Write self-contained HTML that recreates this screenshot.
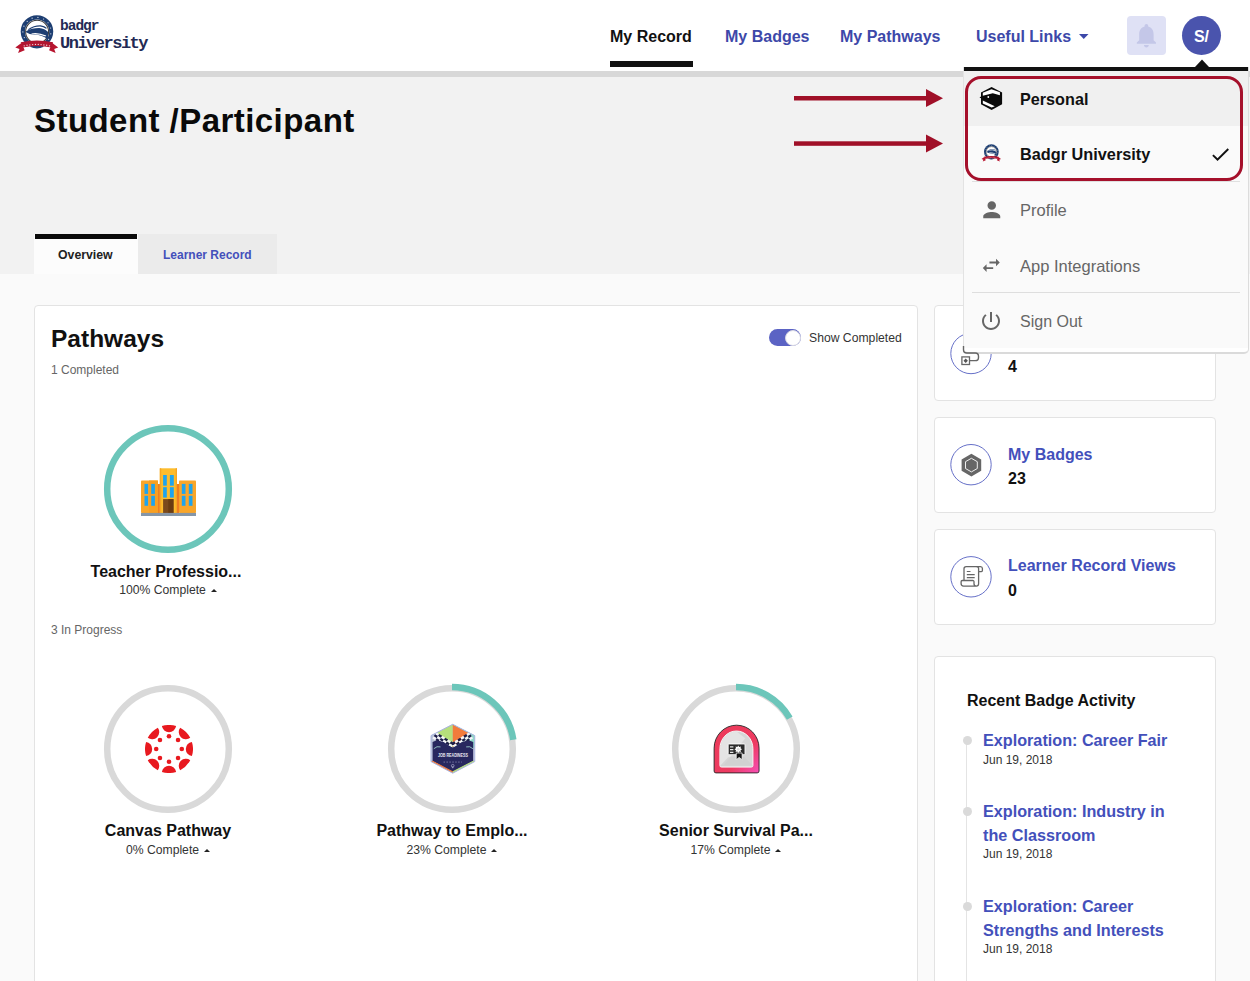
<!DOCTYPE html>
<html>
<head>
<meta charset="utf-8">
<style>
html,body{margin:0;padding:0;}
body{width:1250px;height:981px;overflow:hidden;position:relative;background:#fafafa;font-family:"Liberation Sans",sans-serif;color:#111;}
.a{position:absolute;white-space:nowrap;}
.b{font-weight:700;}
.blue{color:#4350bb;}
.nblue{color:#3d48a9;}
#hdr{position:absolute;left:0;top:0;width:1250px;height:71px;background:#fff;}
#band{position:absolute;left:0;top:71px;width:1250px;height:6px;background:#d8d8d8;}
#hero{position:absolute;left:0;top:77px;width:1250px;height:197px;background:#f2f2f2;}
.car{display:inline-block;width:0;height:0;border-left:3px solid transparent;border-right:3px solid transparent;border-bottom:3.5px solid #222;margin-left:5px;vertical-align:2px;}
.card{position:absolute;background:#fff;border:1px solid #e3e3e3;border-radius:4px;box-sizing:border-box;}
</style>
</head>
<body>
<div id="hdr"></div>
<div id="band"></div>
<div id="hero"></div>

<!-- logo -->
<svg class="a" style="left:12px;top:10px" width="50" height="46" viewBox="0 0 1066 981">
  <circle cx="532" cy="457" r="347" fill="#1d3e72"/>
  <circle cx="339" cy="687" r="13" fill="#dfe6f0"/><circle cx="262" cy="589" r="13" fill="#dfe6f0"/><circle cx="232" cy="467" r="13" fill="#dfe6f0"/><circle cx="254" cy="345" r="13" fill="#dfe6f0"/><circle cx="324" cy="241" r="13" fill="#dfe6f0"/><circle cx="429" cy="175" r="13" fill="#dfe6f0"/><circle cx="553" cy="158" r="13" fill="#dfe6f0"/><circle cx="673" cy="192" r="13" fill="#dfe6f0"/><circle cx="768" cy="272" r="13" fill="#dfe6f0"/><circle cx="823" cy="384" r="13" fill="#dfe6f0"/><circle cx="827" cy="509" r="13" fill="#dfe6f0"/><circle cx="781" cy="625" r="13" fill="#dfe6f0"/><circle cx="691" cy="711" r="13" fill="#dfe6f0"/>
  <circle cx="535" cy="462" r="258" fill="#fff"/>
  <circle cx="535" cy="462" r="245" fill="none" stroke="#3a3a3a" stroke-width="22"/>
  <path d="M340 410 Q470 320 610 325 Q700 335 745 385 L725 400 Q670 355 600 352 Q470 350 360 425 Z" fill="#1d3e72"/>
  <path d="M300 455 Q420 385 580 385 Q700 395 770 470 L765 630 Q640 525 450 525 Q380 522 300 475 Z" fill="#1d3e72"/>
  <path d="M410 500 Q560 470 730 545 L712 565 Q560 505 430 518 Z" fill="#fff"/>
  <path d="M395 790 Q530 850 665 790 L660 770 Q530 815 400 770 Z" fill="#1d3e72"/>
  <path d="M200 705 L70 800 L160 830 L130 915 L270 860 L240 790 Z" fill="#b8152f"/>
  <path d="M860 705 L985 800 L900 830 L930 915 L790 860 L820 790 Z" fill="#b8152f"/>
  <path d="M185 690 Q530 615 875 690 L845 800 Q530 735 225 800 Z" fill="#b01530"/>
  <circle cx="260" cy="764" r="14" fill="#f3d6dc"/><circle cx="320" cy="752" r="14" fill="#f3d6dc"/><circle cx="380" cy="744" r="14" fill="#f3d6dc"/><circle cx="440" cy="738" r="14" fill="#f3d6dc"/><circle cx="500" cy="735" r="14" fill="#f3d6dc"/><circle cx="560" cy="735" r="14" fill="#f3d6dc"/><circle cx="620" cy="738" r="14" fill="#f3d6dc"/><circle cx="680" cy="744" r="14" fill="#f3d6dc"/><circle cx="740" cy="752" r="14" fill="#f3d6dc"/><circle cx="800" cy="764" r="14" fill="#f3d6dc"/>
</svg>
<div class="a b" style="left:60px;top:18.5px;font-family:'Liberation Mono',monospace;font-size:14.5px;line-height:14px;letter-spacing:-1px;color:#232a54">badgr</div>
<div class="a b" style="left:60px;top:34.5px;font-family:'Liberation Mono',monospace;font-size:17px;line-height:17px;letter-spacing:-1.5px;color:#232a54">University</div>

<!-- nav -->
<div class="a b" style="left:610px;top:29px;font-size:16px;line-height:16px;color:#111">My Record</div>
<div class="a" style="left:610px;top:61px;width:83px;height:6px;background:#111"></div>
<div class="a b nblue" style="left:725px;top:29px;font-size:16px;line-height:16px">My Badges</div>
<div class="a b nblue" style="left:840px;top:29px;font-size:16px;line-height:16px">My Pathways</div>
<div class="a b nblue" style="left:976px;top:29px;font-size:16px;line-height:16px">Useful Links</div>
<svg class="a" style="left:1079px;top:33.5px" width="9.5" height="5" viewBox="0 0 9.5 5"><path d="M0 0 H9.5 L4.75 5 Z" fill="#3d48a9"/></svg>
<div class="a" style="left:1127px;top:16px;width:39px;height:39px;border-radius:4px;background:#dfe1f5"></div>
<svg class="a" style="left:1131.8px;top:21px" width="28.8" height="28.8" viewBox="0 0 24 24"><path d="M12 22c1.1 0 2-.9 2-2h-4c0 1.1.89 2 2 2zm6-6v-5c0-3.07-1.64-5.64-4.5-6.32V4c0-.83-.67-1.5-1.5-1.5s-1.5.67-1.5 1.5v.68C7.630 5.36 6 7.920 6 11v5l-2 2v1h16v-1l-2-2z" fill="#c4c7e8"/></svg>
<div class="a" style="left:1182px;top:16px;width:39px;height:39px;border-radius:50%;background:#4a54ad;color:#fff;font-weight:700;font-size:16px;line-height:41px;text-align:center">S/</div>

<!-- title -->
<div class="a b" style="left:34px;top:104px;font-size:33px;line-height:33px;letter-spacing:0.45px;color:#0a0a0a">Student /Participant</div>

<!-- tabs -->
<div class="a" style="left:34px;top:234px;width:104px;height:40px;background:#fcfcfc"></div>
<div class="a" style="left:35px;top:234px;width:102px;height:4.6px;background:#0a0a0a"></div>
<div class="a b" style="left:58px;top:249px;font-size:12.3px;line-height:12px;color:#222">Overview</div>
<div class="a" style="left:138px;top:234px;width:139px;height:40px;background:#ebebeb"></div>
<div class="a b blue" style="left:163px;top:249px;font-size:12px;line-height:12px">Learner Record</div>

<!-- pathways card -->
<div class="card" style="left:34px;top:305px;width:884px;height:700px"></div>
<div class="a b" style="left:51px;top:327px;font-size:24.5px;line-height:24px;color:#111">Pathways</div>
<div class="a" style="left:51px;top:364px;font-size:12px;line-height:12px;color:#666">1 Completed</div>
<div class="a" style="left:769px;top:329px;width:32px;height:17px;border-radius:9px;background:#5b63c4"></div>
<div class="a" style="left:785px;top:329.5px;width:16px;height:16px;border-radius:50%;background:#fff;border:1px solid #d8d8e4;box-sizing:border-box"></div>
<div class="a" style="left:809px;top:332px;font-size:12.2px;line-height:12px;color:#333">Show Completed</div>

<!-- completed item -->
<svg class="a" style="left:102px;top:423px" width="132" height="132" viewBox="0 0 132 132">
  <circle cx="66" cy="66" r="60.8" fill="#fff" stroke="#6cc6ba" stroke-width="6.5"/>
</svg>
<svg class="a" style="left:141px;top:468px" width="56" height="49" viewBox="0 0 56 49">
  <rect x="0" y="12.5" width="17" height="32.5" rx="0.8" fill="#f9a62a"/>
  <rect x="38" y="12.5" width="17" height="32.5" rx="0.8" fill="#f9a62a"/>
  <rect x="8" y="12.5" width="9" height="32.5" fill="#f8a022"/>
  <rect x="17" y="16" width="2.2" height="29" fill="#ef7d22"/>
  <rect x="35.9" y="16" width="2.2" height="29" fill="#ef7d22"/>
  <rect x="18.8" y="0.3" width="17.2" height="44.7" fill="#fdbc2c"/>
  <rect x="18.8" y="0.3" width="1.4" height="44.7" fill="#f6a624"/>
  <rect x="34.6" y="0.3" width="1.4" height="44.7" fill="#f6a624"/>
  <g fill="#1ea4ef">
    <rect x="3.5" y="15.9" width="3.6" height="10"/><rect x="10.2" y="15.9" width="3.7" height="10"/>
    <rect x="3.5" y="27.8" width="3.6" height="10"/><rect x="10.2" y="27.8" width="3.7" height="10"/>
    <rect x="40.8" y="15.9" width="3.7" height="10"/><rect x="47.8" y="15.9" width="3.7" height="10"/>
    <rect x="40.8" y="27.8" width="3.7" height="10"/><rect x="47.8" y="27.8" width="3.7" height="10"/>
    <rect x="22.1" y="7" width="3.7" height="10.7"/><rect x="28.9" y="7" width="3.9" height="10.7"/>
    <rect x="22.1" y="19.2" width="3.7" height="10.4"/><rect x="28.9" y="19.2" width="3.9" height="10.4"/>
  </g>
  <rect x="22.1" y="31.1" width="10.4" height="13.9" fill="#7b4a1c"/>
  <rect x="27.3" y="31.1" width="5.2" height="13.9" fill="#6a3c12"/>
  <rect x="0" y="44.9" width="55" height="3.1" fill="#8596a8"/>
</svg>
<div class="a b" style="left:66px;top:564px;width:200px;text-align:center;font-size:16px;line-height:16px;color:#111">Teacher Professio...</div>
<div class="a" style="left:68px;top:584px;width:200px;text-align:center;font-size:12.2px;line-height:12px;color:#333">100% Complete<span class="car"></span></div>
<div class="a" style="left:51px;top:624px;font-size:12px;line-height:12px;color:#666">3 In Progress</div>

<!-- in progress items -->
<svg class="a" style="left:102px;top:683px" width="132" height="132" viewBox="0 0 132 132">
  <circle cx="66" cy="66" r="60.8" fill="#fff" stroke="#d9d9d9" stroke-width="6.5"/>
</svg>
<svg class="a" style="left:144.6px;top:724.9px" width="48" height="48" viewBox="0 0 48 48"><g fill="#e8191f"><path d="M31.12 1.08 A24.0 24.0 0 0 0 16.88 1.08 A7.2 7.2 0 0 0 31.12 1.08 Z M45.24 12.83 A24.0 24.0 0 0 0 35.17 2.76 A7.2 7.2 0 0 0 45.24 12.83 Z M46.92 31.12 A24.0 24.0 0 0 0 46.92 16.88 A7.2 7.2 0 0 0 46.92 31.12 Z M35.17 45.24 A24.0 24.0 0 0 0 45.24 35.17 A7.2 7.2 0 0 0 35.17 45.24 Z M16.88 46.92 A24.0 24.0 0 0 0 31.12 46.92 A7.2 7.2 0 0 0 16.88 46.92 Z M2.76 35.17 A24.0 24.0 0 0 0 12.83 45.24 A7.2 7.2 0 0 0 2.76 35.17 Z M1.08 16.88 A24.0 24.0 0 0 0 1.08 31.12 A7.2 7.2 0 0 0 1.08 16.88 Z M12.83 2.76 A24.0 24.0 0 0 0 2.76 12.83 A7.2 7.2 0 0 0 12.83 2.76 Z"/><circle cx="24.00" cy="11.20" r="2.3"/><circle cx="33.05" cy="14.95" r="2.3"/><circle cx="36.80" cy="24.00" r="2.3"/><circle cx="33.05" cy="33.05" r="2.3"/><circle cx="24.00" cy="36.80" r="2.3"/><circle cx="14.95" cy="33.05" r="2.3"/><circle cx="11.20" cy="24.00" r="2.3"/><circle cx="14.95" cy="14.95" r="2.3"/></g></svg>
<div class="a b" style="left:68px;top:823px;width:200px;text-align:center;font-size:16px;line-height:16px;color:#111">Canvas Pathway</div>
<div class="a" style="left:68px;top:844px;width:200px;text-align:center;font-size:12.2px;line-height:12px;color:#333">0% Complete<span class="car"></span></div>

<svg class="a" style="left:386px;top:683px" width="132" height="132" viewBox="0 0 132 132">
  <circle cx="66" cy="66" r="60.8" fill="#fff" stroke="#d9d9d9" stroke-width="6.5"/>
  <circle cx="66" cy="66" r="62" fill="none" stroke="#6cc6ba" stroke-width="6.5" stroke-dasharray="87.9 400" transform="rotate(-90 66 66)"/>
</svg>
<svg class="a" style="left:424px;top:720px" width="56" height="60" viewBox="0 0 916 981">
  <defs><clipPath id="hexc"><path d="M470 70 L830 255 L830 680 L470 870 L115 680 L115 255 Z"/></clipPath></defs>
  <path d="M470 70 L830 255 L830 680 L470 870 L115 680 L115 255 Z" fill="#c6cde3"/>
  <g clip-path="url(#hexc)">
    <path d="M100 60 L470 60 L470 450 L100 450 Z" fill="#b9c4d8"/>
    <path d="M470 60 L840 60 L840 450 L470 450 Z" fill="#8fd7c8"/>
    <path d="M470 75 L200 215 L470 450 Z" fill="#b6df7b"/>
    <path d="M470 75 L740 215 L470 450 Z" fill="#f27b3c"/>
    <path d="M202 199 L250 229 L229 263 L181 233 Z" fill="#f4f4f8"/><path d="M181 233 L229 263 L208 297 L159 267 Z" fill="#1e1e4a"/><path d="M159 267 L208 297 L187 331 L138 301 Z" fill="#f4f4f8"/><path d="M250 229 L298 259 L277 293 L229 263 Z" fill="#1e1e4a"/><path d="M229 263 L277 293 L256 327 L208 297 Z" fill="#f4f4f8"/><path d="M208 297 L256 327 L235 361 L187 331 Z" fill="#1e1e4a"/><path d="M298 259 L347 289 L326 323 L277 293 Z" fill="#f4f4f8"/><path d="M277 293 L326 323 L304 357 L256 327 Z" fill="#1e1e4a"/><path d="M256 327 L304 357 L283 391 L235 361 Z" fill="#f4f4f8"/><path d="M347 289 L395 319 L374 353 L326 323 Z" fill="#1e1e4a"/><path d="M326 323 L374 353 L353 387 L304 357 Z" fill="#f4f4f8"/><path d="M304 357 L353 387 L332 421 L283 391 Z" fill="#1e1e4a"/><path d="M395 319 L443 349 L422 383 L374 353 Z" fill="#f4f4f8"/><path d="M374 353 L422 383 L401 417 L353 387 Z" fill="#1e1e4a"/><path d="M353 387 L401 417 L380 451 L332 421 Z" fill="#f4f4f8"/><path d="M443 349 L492 379 L471 413 L422 383 Z" fill="#1e1e4a"/><path d="M422 383 L471 413 L449 447 L401 417 Z" fill="#f4f4f8"/><path d="M401 417 L449 447 L428 481 L380 451 Z" fill="#1e1e4a"/><path d="M802 301 L753 331 L732 297 L781 267 Z" fill="#f4f4f8"/><path d="M781 267 L732 297 L711 263 L759 233 Z" fill="#1e1e4a"/><path d="M759 233 L711 263 L690 229 L738 199 Z" fill="#f4f4f8"/><path d="M753 331 L705 361 L684 327 L732 297 Z" fill="#1e1e4a"/><path d="M732 297 L684 327 L663 293 L711 263 Z" fill="#f4f4f8"/><path d="M711 263 L663 293 L642 259 L690 229 Z" fill="#1e1e4a"/><path d="M705 361 L657 391 L636 357 L684 327 Z" fill="#f4f4f8"/><path d="M684 327 L636 357 L614 323 L663 293 Z" fill="#1e1e4a"/><path d="M663 293 L614 323 L593 289 L642 259 Z" fill="#f4f4f8"/><path d="M657 391 L608 421 L587 387 L636 357 Z" fill="#1e1e4a"/><path d="M636 357 L587 387 L566 353 L614 323 Z" fill="#f4f4f8"/><path d="M614 323 L566 353 L545 319 L593 289 Z" fill="#1e1e4a"/><path d="M608 421 L560 451 L539 417 L587 387 Z" fill="#f4f4f8"/><path d="M587 387 L539 417 L518 383 L566 353 Z" fill="#1e1e4a"/><path d="M566 353 L518 383 L497 349 L545 319 Z" fill="#f4f4f8"/><path d="M560 451 L512 481 L491 447 L539 417 Z" fill="#1e1e4a"/><path d="M539 417 L491 447 L469 413 L518 383 Z" fill="#f4f4f8"/><path d="M518 383 L469 413 L448 379 L497 349 Z" fill="#1e1e4a"/>
    <path d="M140 360 Q200 330 260 345 Q330 360 380 400 Q430 440 470 450 Q510 440 560 400 Q610 360 680 345 Q740 330 805 360 L805 670 L470 850 L140 670 Z" fill="#28285f"/>
    <path d="M160 470 Q210 420 270 440 M800 470 Q750 420 690 440" fill="none" stroke="#9fd4cc" stroke-width="14"/>
    <path d="M115 680 L470 870 L470 840 L140 665 Z" fill="#f27b3c"/>
    <path d="M830 680 L470 870 L470 840 L805 665 Z" fill="#b6df7b"/>
  </g>
  <path d="M470 70 L830 255 L830 680 L470 870 L115 680 L115 255 Z" fill="none" stroke="#aab4de" stroke-width="16"/>
  <text x="472" y="605" text-anchor="middle" font-family="Liberation Sans" font-weight="700" font-size="82" fill="#e8e8f2" textLength="490" lengthAdjust="spacingAndGlyphs">JOB READINESS</text>
  <path d="M320 688 H620" stroke="#8c8cb4" stroke-width="14" stroke-dasharray="22 26"/>
  <circle cx="470" cy="748" r="22" fill="none" stroke="#c9c9e6" stroke-width="9"/>
  <path d="M455 770 H485 M470 770 V790" stroke="#c9c9e6" stroke-width="9"/>
</svg>
<div class="a b" style="left:352px;top:823px;width:200px;text-align:center;font-size:16px;line-height:16px;color:#111">Pathway to Emplo...</div>
<div class="a" style="left:352px;top:844px;width:200px;text-align:center;font-size:12.2px;line-height:12px;color:#333">23% Complete<span class="car"></span></div>

<svg class="a" style="left:670px;top:683px" width="132" height="132" viewBox="0 0 132 132">
  <circle cx="66" cy="66" r="60.8" fill="#fff" stroke="#d9d9d9" stroke-width="6.5"/>
  <circle cx="66" cy="66" r="62" fill="none" stroke="#6cc6ba" stroke-width="6.5" stroke-dasharray="64.9 400" transform="rotate(-90 66 66)"/>
</svg>
<svg class="a" style="left:708px;top:720px" width="56" height="60" viewBox="0 0 916 981">
  <defs><linearGradient id="sg" x1="0" y1="0" x2="1" y2="1"><stop offset="0" stop-color="#ec3a58"/><stop offset="0.65" stop-color="#ee3b62"/><stop offset="1" stop-color="#f750b8"/></linearGradient></defs>
  <path d="M100 460 A367 375 0 0 1 835 460 V835 A30 30 0 0 1 805 865 H130 A30 30 0 0 1 100 835 Z" fill="url(#sg)" stroke="#1e1e1e" stroke-width="14"/>
  <path d="M195 470 A270 290 0 0 1 735 470 V745 A25 25 0 0 1 710 770 H220 A25 25 0 0 1 195 745 Z" fill="#d6d6d6" stroke="#f8f8f8" stroke-width="16"/>
  <path d="M203 470 A262 282 0 0 1 465 188 L610 300 L260 735 L203 735 Z" fill="#e4e4e4"/>
  <path d="M203 745 L330 610 L600 610 L727 745 Z" fill="#cfcfcf" opacity="0.7"/>
  <rect x="330" y="392" width="275" height="175" rx="14" fill="#2b2b2b" stroke="#fff" stroke-width="14"/>
  <path d="M360 440 H415 M360 485 H415 M360 530 H415" stroke="#e6e6e6" stroke-width="20"/>
  <path d="M462 540 L462 648 L510 612 L558 648 L558 540 Z" fill="#111" stroke="#fff" stroke-width="12"/>
  <path d="M557 478 L532 493 L539 522 L510 515 L495 540 L480 515 L451 522 L458 493 L433 478 L458 463 L451 434 L480 441 L495 416 L510 441 L539 434 L532 463 Z" fill="#fff"/>
  <circle cx="495" cy="478" r="22" fill="#dcdcdc"/>
</svg>
<div class="a b" style="left:636px;top:823px;width:200px;text-align:center;font-size:16px;line-height:16px;color:#111">Senior Survival Pa...</div>
<div class="a" style="left:636px;top:844px;width:200px;text-align:center;font-size:12.2px;line-height:12px;color:#333">17% Complete<span class="car"></span></div>

<!-- right cards -->
<div class="card" style="left:934px;top:305px;width:282px;height:96px"></div>
<div class="a b blue" style="left:1008px;top:336px;font-size:16px;line-height:16px">My Pathways</div>
<div class="a b" style="left:1008px;top:359px;font-size:16px;line-height:16px;color:#111">4</div>

<div class="card" style="left:934px;top:417px;width:282px;height:96px"></div>
<div class="a b blue" style="left:1008px;top:447px;font-size:16px;line-height:16px">My Badges</div>
<div class="a b" style="left:1008px;top:471px;font-size:16px;line-height:16px;color:#111">23</div>

<div class="card" style="left:934px;top:529px;width:282px;height:96px"></div>
<div class="a b blue" style="left:1008px;top:558px;font-size:16px;line-height:16px">Learner Record Views</div>
<div class="a b" style="left:1008px;top:583px;font-size:16px;line-height:16px;color:#111">0</div>


<!-- card icons -->
<svg class="a" style="left:950px;top:333px" width="42" height="42" viewBox="0 0 42 42">
  <circle cx="21" cy="20.5" r="20.2" fill="#fff" stroke="#6670c8" stroke-width="1"/>
</svg>
<svg class="a" style="left:950px;top:444px" width="42" height="42" viewBox="0 0 42 42">
  <circle cx="21" cy="20.7" r="20.2" fill="#fff" stroke="#6670c8" stroke-width="1"/>
  <path d="M21.4 9.8 L31.2 15.4 L31.2 26.8 L21.4 32.4 L11.6 26.8 L11.6 15.4 Z" fill="#666"/>
  <path d="M21.4 14.3 L27.3 17.7 L27.3 24.5 L21.4 27.9 L15.5 24.5 L15.5 17.7 Z" fill="#666" stroke="#fff" stroke-width="0.9"/>
</svg>
<svg class="a" style="left:950px;top:556px" width="42" height="42" viewBox="0 0 42 42">
  <circle cx="21" cy="20.8" r="20.2" fill="#fff" stroke="#6670c8" stroke-width="1"/>
  <path d="M14 24.5 V12.8 A2.2 2.2 0 0 1 16.2 10.6 H30.5 A2 2 0 0 1 32.4 12.6 V14.6 A1 1 0 0 1 31.4 15.6 H28.6 V27.8 A2.3 2.3 0 0 1 26.3 30.1 A2.3 2.3 0 0 1 24 27.8 V25.8 A1.2 1.2 0 0 0 22.8 24.5 H12.3 A1.2 1.2 0 0 0 11.1 25.7 V27.6 A2.5 2.5 0 0 0 13.6 30.1 H26.3" fill="none" stroke="#666" stroke-width="1.3" stroke-linejoin="round"/>
  <path d="M28.6 15.6 V12.6 A2 2 0 0 0 26.6 10.6" fill="none" stroke="#666" stroke-width="1.3"/>
  <path d="M16.8 15.5 H20.5 M16.8 18.6 H24.7 M16.8 21.6 H24.7" stroke="#666" stroke-width="1.2"/>
</svg>
<!-- recent activity -->
<div class="card" style="left:934px;top:656px;width:282px;height:400px"></div>
<div class="a b" style="left:967px;top:693px;font-size:16px;line-height:16px;color:#111">Recent Badge Activity</div>
<div class="a" style="left:966px;top:740px;width:1px;height:260px;background:#e4e4e4"></div>
<div class="a" style="left:962.5px;top:735.6px;width:9px;height:9px;border-radius:50%;background:#dadada"></div>
<div class="a" style="left:962.5px;top:806.6px;width:9px;height:9px;border-radius:50%;background:#dadada"></div>
<div class="a" style="left:962.5px;top:901.6px;width:9px;height:9px;border-radius:50%;background:#dadada"></div>
<div class="a b blue" style="left:983px;top:732px;font-size:16.2px;line-height:16px">Exploration: Career Fair</div>
<div class="a" style="left:983px;top:754px;font-size:12px;line-height:12px;color:#333">Jun 19, 2018</div>
<div class="a b blue" style="left:983px;top:800px;font-size:16.2px;line-height:23.5px">Exploration: Industry in<br>the Classroom</div>
<div class="a" style="left:983px;top:848px;font-size:12px;line-height:12px;color:#333">Jun 19, 2018</div>
<div class="a b blue" style="left:983px;top:895px;font-size:16.2px;line-height:23.5px">Exploration: Career<br>Strengths and Interests</div>
<div class="a" style="left:983px;top:943px;font-size:12px;line-height:12px;color:#333">Jun 19, 2018</div>

<!-- arrows -->
<svg class="a" style="left:790px;top:85px" width="160" height="75" viewBox="0 0 160 75">
  <rect x="4" y="11" width="134" height="4.5" fill="#a01028"/>
  <path d="M136 4 L153 13.2 L136 22 Z" fill="#a01028"/>
  <rect x="4" y="56.3" width="134" height="4.5" fill="#a01028"/>
  <path d="M136 49.5 L153 58.5 L136 67.5 Z" fill="#a01028"/>
</svg>

<!-- dropdown -->
<div class="a" style="left:963px;top:67px;width:286px;height:286.5px;background:#fff;border-left:1px solid #e3e3e3;border-right:1.5px solid #dcdcdc;border-bottom:2px solid #dadada;border-radius:0 0 5px 5px;box-sizing:border-box"></div>
<div class="a" style="left:964px;top:71px;width:283.5px;height:276.7px;background:#fafafa"></div>
<div class="a" style="left:964px;top:67px;width:284px;height:4px;background:#111"></div>
<svg class="a" style="left:1194px;top:59px" width="16" height="8" viewBox="0 0 16 8"><path d="M1 8 L8 0.5 L15 8 Z" fill="#111"/></svg>
<div class="a" style="left:964px;top:71px;width:284px;height:55px;background:#f0f0f0"></div>
<div class="a" style="left:965px;top:75.5px;width:278px;height:105.5px;border:3.5px solid #a5102b;border-radius:16px;box-sizing:border-box"></div>
<div class="a b" style="left:1020px;top:91px;font-size:16.2px;line-height:16px;color:#111">Personal</div>
<div class="a b" style="left:1020px;top:146px;font-size:16.3px;line-height:16px;color:#111">Badgr University</div>
<div class="a" style="left:972px;top:181px;width:268px;height:1px;background:#e0e0e0"></div>
<div class="a" style="left:1020px;top:202px;font-size:16.5px;line-height:16px;color:#666">Profile</div>
<div class="a" style="left:1020px;top:258px;font-size:16.5px;line-height:16px;color:#666">App Integrations</div>
<div class="a" style="left:972px;top:292px;width:268px;height:1px;background:#dedede"></div>
<div class="a" style="left:1020px;top:314px;font-size:16px;line-height:16px;color:#666">Sign Out</div>


<!-- dropdown icons -->
<svg class="a" style="left:979px;top:86px" width="24" height="25" viewBox="0 0 24 25">
  <path d="M12.6 0.9 L23.1 6.6 L23.1 18.2 L12.6 23.9 L2 18.2 L2 12.2 L0.5 11.4 L2 10.6 L2 6.6 Z" fill="#0a0a0a"/>
  <path d="M3.8 6.7 L12.5 3.3 L20.9 6.3 L20.9 9.2 L13.8 7.2 L3.8 9.8 Z" fill="#fff"/>
  <path d="M3.8 14.6 L15.8 20.2 L12.7 21.5 L3.8 17.6 Z" fill="#fff"/>
  <circle cx="9.3" cy="11" r="0.9" fill="#fff"/>
</svg>
<svg class="a" style="left:980px;top:141.6px" width="22.75" height="20.9" viewBox="0 0 1066 981">
  <circle cx="532" cy="457" r="347" fill="#1d3e72"/>
  <circle cx="339" cy="687" r="13" fill="#dfe6f0"/><circle cx="262" cy="589" r="13" fill="#dfe6f0"/><circle cx="232" cy="467" r="13" fill="#dfe6f0"/><circle cx="254" cy="345" r="13" fill="#dfe6f0"/><circle cx="324" cy="241" r="13" fill="#dfe6f0"/><circle cx="429" cy="175" r="13" fill="#dfe6f0"/><circle cx="553" cy="158" r="13" fill="#dfe6f0"/><circle cx="673" cy="192" r="13" fill="#dfe6f0"/><circle cx="768" cy="272" r="13" fill="#dfe6f0"/><circle cx="823" cy="384" r="13" fill="#dfe6f0"/><circle cx="827" cy="509" r="13" fill="#dfe6f0"/><circle cx="781" cy="625" r="13" fill="#dfe6f0"/><circle cx="691" cy="711" r="13" fill="#dfe6f0"/>
  <circle cx="535" cy="462" r="258" fill="#fff"/>
  <circle cx="535" cy="462" r="245" fill="none" stroke="#3a3a3a" stroke-width="22"/>
  <path d="M340 410 Q470 320 610 325 Q700 335 745 385 L725 400 Q670 355 600 352 Q470 350 360 425 Z" fill="#1d3e72"/>
  <path d="M300 455 Q420 385 580 385 Q700 395 770 470 L765 630 Q640 525 450 525 Q380 522 300 475 Z" fill="#1d3e72"/>
  <path d="M410 500 Q560 470 730 545 L712 565 Q560 505 430 518 Z" fill="#fff"/>
  <path d="M395 790 Q530 850 665 790 L660 770 Q530 815 400 770 Z" fill="#1d3e72"/>
  <path d="M200 705 L70 800 L160 830 L130 915 L270 860 L240 790 Z" fill="#b8152f"/>
  <path d="M860 705 L985 800 L900 830 L930 915 L790 860 L820 790 Z" fill="#b8152f"/>
  <path d="M185 690 Q530 615 875 690 L845 800 Q530 735 225 800 Z" fill="#b01530"/>
  <circle cx="260" cy="764" r="14" fill="#f3d6dc"/><circle cx="320" cy="752" r="14" fill="#f3d6dc"/><circle cx="380" cy="744" r="14" fill="#f3d6dc"/><circle cx="440" cy="738" r="14" fill="#f3d6dc"/><circle cx="500" cy="735" r="14" fill="#f3d6dc"/><circle cx="560" cy="735" r="14" fill="#f3d6dc"/><circle cx="620" cy="738" r="14" fill="#f3d6dc"/><circle cx="680" cy="744" r="14" fill="#f3d6dc"/><circle cx="740" cy="752" r="14" fill="#f3d6dc"/><circle cx="800" cy="764" r="14" fill="#f3d6dc"/>
</svg>
<svg class="a" style="left:1208.8px;top:142.7px" width="22.8" height="22.8" viewBox="0 0 24 24"><path d="M9 16.17L4.83 12l-1.42 1.41L9 19 21 7l-1.41-1.41z" fill="#111"/></svg>
<svg class="a" style="left:978.7px;top:197.2px" width="25.5" height="25.5" viewBox="0 0 24 24"><path d="M12 12c2.21 0 4-1.79 4-4s-1.79-4-4-4-4 1.79-4 4 1.79 4 4 4zm0 2c-2.67 0-8 1.34-8 4v2h16v-2c0-2.66-5.33-4-8-4z" fill="#666"/></svg>
<svg class="a" style="left:980.2px;top:254.3px" width="22.6" height="22.6" viewBox="0 0 24 24"><path d="M6.99 11L3 15l3.99 4v-3H14v-2H6.99v-3zM21 9l-3.99-4v3H10v2h7.01v3L21 9z" fill="#666"/></svg>
<svg class="a" style="left:979.4px;top:309px" width="24" height="24" viewBox="0 0 24 24"><path d="M13 3h-2v10h2V3zm4.83 2.17l-1.42 1.42C17.99 7.86 19 9.81 19 12c0 3.87-3.13 7-7 7s-7-3.13-7-7c0-2.19 1.01-4.14 2.58-5.42L6.17 5.17C4.23 6.82 3 9.260 3 12c0 4.97 4.030 9 9 9s9-4.03 9-9c0-2.74-1.23-5.18-3.17-6.83z" fill="#666"/></svg>
<svg class="a" style="left:950px;top:333px" width="42" height="42" viewBox="0 0 42 42">
  <path d="M13.5 13 V16.8 A3.2 3.2 0 0 0 16.7 20 H25.3 A3.2 3.2 0 0 1 28.5 23.2 V24.4 A3.2 3.2 0 0 1 25.3 27.6 H19.8" fill="none" stroke="#666" stroke-width="1.4"/>
  <rect x="11.9" y="23.9" width="7.6" height="7.6" fill="none" stroke="#666" stroke-width="1.3"/>
  <path d="M15.7 25.4 L17.9 27.7 L15.7 30 L13.5 27.7 Z" fill="#555"/>
</svg>
</body>
</html>
